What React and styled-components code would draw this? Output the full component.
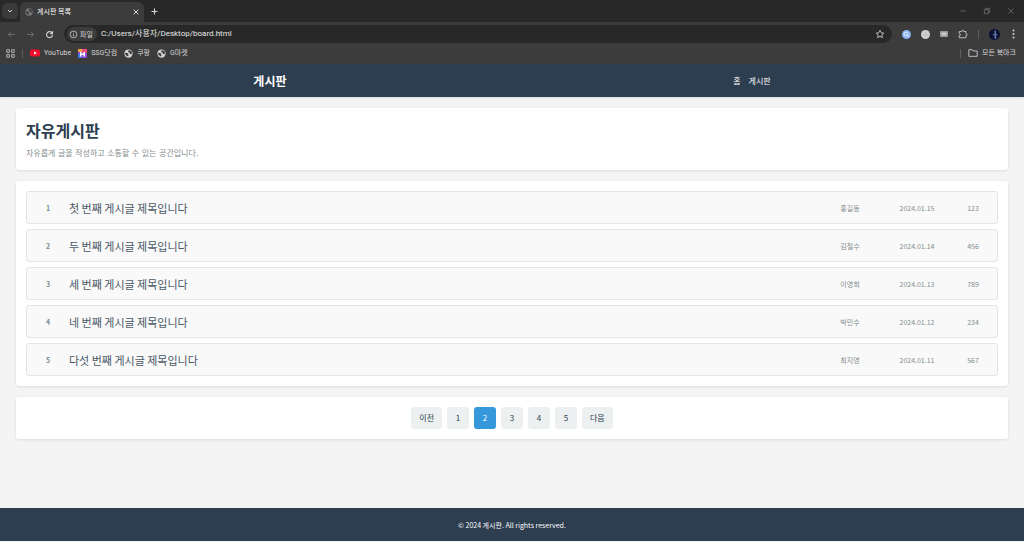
import React from 'react';
import styled, { createGlobalStyle, ThemeProvider } from 'styled-components';

const theme = {
	font: {
		page: "'Noto Sans CJK KR', 'Noto Sans', sans-serif",
		chrome: "Roboto, 'Noto Sans CJK KR', sans-serif",
		prose: "'DejaVu Sans', 'Noto Sans CJK KR', sans-serif",
	},
	color: {
		frame: '#282828',
		toolbar: '#3c3c3c',
		omnibox: '#282828',
		chromeText: '#d4d4d4',
		chromeMuted: '#7c7c7c',
		navy: '#2c3e50',
		page: '#f4f4f4',
		white: '#fff',
		row: '#f9f9f9',
		rowBorder: '#e3e5e6',
		grey: '#7f8c8d',
		title: '#4a5866',
		button: '#ecf0f1',
		blue: '#3498db',
	},
	shadow: '0 1px 3px rgba(0, 0, 0, 0.1)',
};

const GlobalStyle = createGlobalStyle`
	* {
		box-sizing: border-box;
	}
	html, body, #root {
		height: 100%;
	}
	body {
		margin: 0;
		font-family: ${theme.font.page};
		background: #f4f4f4;
	}
	a {
		color: inherit;
		text-decoration: none;
	}
	button, input {
		font-family: inherit;
		margin: 0;
	}
`;

const Window = styled.div`
	min-height: 100vh;
	display: flex;
	flex-direction: column;
	padding-bottom: 1px;
`;

/* browser */

const Chrome = styled.div`
	font-family: ${props => props.theme.font.chrome};
`;

const TabStrip = styled.div`
	display: flex;
	align-items: stretch;
	height: 22px;
	padding-left: 2px;
	background: ${props => props.theme.color.frame};
	color: ${props => props.theme.color.chromeText};
`;

const IconButton = styled.button`
	display: flex;
	align-items: center;
	justify-content: center;
	flex: none;
	width: 16px;
	height: 16px;
	padding: 0;
	border: none;
	border-radius: 5px;
	background: ${props => props.$fill || 'none'};
	color: ${props => (props.$muted ? props.theme.color.chromeMuted : props.theme.color.chromeText)};
	align-self: center;
	cursor: pointer;

	& svg {
		display: block;
	}
`;

const Tab = styled.div`
	display: flex;
	align-items: center;
	gap: 4px;
	width: 124px;
	margin: 2px 2px 0;
	padding: 0 0 0 5px;
	border-radius: 6px 6px 0 0;
	background: ${props => props.theme.color.toolbar};
	font-size: 7px;
	line-height: 12px;
`;

const TabTitle = styled.span`
	flex: 1;
	color: #fff;
`;

const WindowControls = styled.div`
	display: flex;
	gap: 8px;
	margin-left: auto;
	padding-right: 5px;
`;

const Divider = styled.span`
	width: 1px;
	height: 9px;
	background: #5e5e5e;
`;

const Toolbar = styled.div`
	display: flex;
	align-items: center;
	gap: 3px;
	height: 24px;
	padding: 0 3px;
	background: ${props => props.theme.color.toolbar};

	& > ${Divider} {
		margin: 0 4px;
	}
`;

const Omnibox = styled.div`
	display: flex;
	align-items: center;
	flex: 1;
	height: 18px;
	margin: 0 3px 0 4px;
	padding: 0 4px 0 3px;
	border-radius: 9px;
	background: ${props => props.theme.color.omnibox};
	color: ${props => props.theme.color.chromeText};
`;

const FileChip = styled.span`
	display: flex;
	align-items: center;
	gap: 2px;
	height: 14px;
	padding: 0 4px 0 2px;
	border-radius: 7px;
	background: #3c3c3c;
	font-size: 7px;
`;

const UrlInput = styled.input`
	flex: 1;
	min-width: 0;
	padding: 0 0 0 4px;
	border: none;
	outline: none;
	background: none;
	color: #e8e8e8;
	font-size: 8px;
	line-height: 14px;
`;

const Bookmarks = styled.div`
	display: flex;
	align-items: center;
	gap: 7px;
	height: 18px;
	padding: 0 8px 4px 6px;
	background: ${props => props.theme.color.toolbar};
	color: ${props => props.theme.color.chromeText};
	font-size: 7px;
	line-height: 12px;
`;

const Bookmark = styled.a`
	display: flex;
	align-items: center;
	gap: 4px;
`;

const Spacer = styled.span`
	flex: 1;
`;

/* board page */

const SiteHeader = styled.header`
	position: relative;
	display: flex;
	align-items: center;
	justify-content: space-around;
	height: 33px;
	padding: 0 30px;
	background: ${props => props.theme.color.navy};
	box-shadow: ${props => props.theme.shadow};
	color: #fff;
`;

const Logo = styled.div`
	font-size: 12px;
	font-weight: 700;
	line-height: 16px;
`;

const Nav = styled.nav`
	display: flex;
	gap: 8px;
	font-size: 8px;
	line-height: 12px;
`;

const Main = styled.main`
	flex: 1;
	display: flex;
	flex-direction: column;
	gap: 11px;
	padding: 11px 16px;
	background: ${props => props.theme.color.page};
`;

const Card = styled.section`
	padding: 10px;
	border-radius: 3px;
	background: ${props => props.theme.color.white};
	box-shadow: ${props => props.theme.shadow};
`;

const Title = styled.h1`
	margin: 0 0 5px;
	color: ${props => props.theme.color.navy};
	font-size: 16px;
	line-height: 24px;
`;

const Subtitle = styled.p`
	margin: 0;
	color: ${props => props.theme.color.grey};
	font-family: ${props => props.theme.font.prose};
	font-size: 8px;
	line-height: 13px;
`;

const PostList = styled.ul`
	display: flex;
	flex-direction: column;
	gap: 5px;
	margin: 0;
	padding: 0;
	list-style: none;
`;

const PostRow = styled.li`
	display: grid;
	grid-template-columns: 22px 1fr 48px 66px 26px;
	column-gap: 10px;
	align-items: center;
	height: 33px;
	padding: 0 11px 0 10px;
	border: 1px solid ${props => props.theme.color.rowBorder};
	border-radius: 3px;
	background: ${props => props.theme.color.row};
`;

const PostTitle = styled.a`
	color: ${props => props.theme.color.title};
	font-size: 11px;
	line-height: 16px;
`;

const PostMeta = styled.span`
	color: ${props => props.theme.color.grey};
	font-size: 7px;
	font-weight: ${props => (props.$strong ? 700 : 400)};
	line-height: 12px;
	text-align: center;
`;

const Pagination = styled.nav`
	display: flex;
	justify-content: center;
	gap: 5px;
`;

const PageButton = styled.button`
	min-width: 22px;
	height: 22px;
	padding: 0 8px;
	border: none;
	border-radius: 3px;
	background: ${props => (props.$active ? props.theme.color.blue : props.theme.color.button)};
	color: ${props => (props.$active ? '#fff' : props.theme.color.navy)};
	font-size: 8px;
	line-height: 12px;
	cursor: pointer;
`;

const SiteFooter = styled.footer`
	display: flex;
	align-items: center;
	justify-content: center;
	height: 33px;
	background: ${props => props.theme.color.navy};
	color: #fff;
	font-size: 7px;
	line-height: 12px;
`;

/* icons */

const Icon = ({ size = 10, stroke = 2, children, ...rest }) => (
	<svg
		width={size}
		height={size}
		viewBox="0 0 24 24"
		fill="none"
		stroke="currentColor"
		strokeWidth={stroke}
		{...rest}
	>
		{children}
	</svg>
);

const Globe = ({ color = '#d4d4d4', land = '#3c3c3c', size = 9 }) => (
	<svg width={size} height={size} viewBox="0 0 24 24">
		<circle cx="12" cy="12" r="11" fill={color} />
		<path d="M3 10l7 1 2 4-1 5-4-2-4-5z M12 3l8 2 1 8-4 1-2-4-4-2z" fill={land} />
	</svg>
);

const YouTubeIcon = () => (
	<svg width="10" height="8" viewBox="0 0 20 16">
		<rect y="1" width="20" height="14" rx="4" fill="#f50f2d" />
		<path d="M8 5l6 3-6 3z" fill="#fff" />
	</svg>
);

const SsgIcon = () => (
	<svg width="9" height="9" viewBox="0 0 18 18">
		<rect width="18" height="18" rx="2" fill="#8a4be0" />
		<path d="M0 0h9v6H0z" fill="#f7a03c" />
		<path d="M9 0h9v8H9z" fill="#ef4a7c" />
		<path d="M0 10h6v8H0z" fill="#3d7bf0" />
		<path d="M4 6h3v3h4V6h3v9h-3v-3H7v3H4z" fill="#fff" />
	</svg>
);

const posts = [
	{ id: 1, title: '첫 번째 게시글 제목입니다', author: '홍길동', date: '2024.01.15', views: 123 },
	{ id: 2, title: '두 번째 게시글 제목입니다', author: '김철수', date: '2024.01.14', views: 456 },
	{ id: 3, title: '세 번째 게시글 제목입니다', author: '이영희', date: '2024.01.13', views: 789 },
	{ id: 4, title: '네 번째 게시글 제목입니다', author: '박민수', date: '2024.01.12', views: 234 },
	{ id: 5, title: '다섯 번째 게시글 제목입니다', author: '최지영', date: '2024.01.11', views: 567 },
];

const pages = ['이전', '1', '2', '3', '4', '5', '다음'];

const BrowserChrome = () => (
	<Chrome>
		<TabStrip>
			<IconButton aria-label="탭 검색" $fill="#3a3a3a">
				<Icon size={8} stroke={3}><path d="M6 9l6 6 6-6" /></Icon>
			</IconButton>
			<Tab>
				<Globe color="#777" size={8} />
				<TabTitle>게시판 목록</TabTitle>
				<IconButton aria-label="탭 닫기">
					<Icon size={8} stroke={3}><path d="M5 5l14 14M19 5L5 19" /></Icon>
				</IconButton>
			</Tab>
			<IconButton aria-label="새 탭">
				<Icon size={9} stroke={3}><path d="M12 4v16M4 12h16" /></Icon>
			</IconButton>
			<WindowControls>
				<IconButton aria-label="최소화" $muted>
					<Icon size={8}><path d="M4 12h16" /></Icon>
				</IconButton>
				<IconButton aria-label="창 복원" $muted>
					<Icon size={8}><path d="M4 8h12v12H4zM8 8V4h12v12h-4" /></Icon>
				</IconButton>
				<IconButton aria-label="닫기" $muted>
					<Icon size={8}><path d="M4 4l16 16M20 4L4 20" /></Icon>
				</IconButton>
			</WindowControls>
		</TabStrip>
		<Toolbar>
			<IconButton aria-label="뒤로" $muted>
				<Icon size={9}><path d="M21 12H4M11 5l-7 7 7 7" /></Icon>
			</IconButton>
			<IconButton aria-label="앞으로" $muted>
				<Icon size={9}><path d="M3 12h17M13 5l7 7-7 7" /></Icon>
			</IconButton>
			<IconButton aria-label="새로고침">
				<Icon size={9} stroke={3}><path d="M19 8a8 8 0 1 0 1 6M20 3v7h-7" /></Icon>
			</IconButton>
			<Omnibox>
				<FileChip>
					<Icon size={9}><circle cx="12" cy="12" r="9" /><path d="M12 11v6M12 7v2" /></Icon>
					파일
				</FileChip>
				<UrlInput aria-label="주소" defaultValue="C:/Users/사용자/Desktop/board.html" />
				<IconButton aria-label="북마크에 추가">
					<Icon size={10}><path d="M12 3l3 6 6 1-4.500 4 1 7-5.500-3.500L6.500 21l1-7L3 10l6-1z" /></Icon>
				</IconButton>
			</Omnibox>
			<IconButton aria-label="검색 확장">
				<svg width="9" height="9" viewBox="0 0 18 18">
					<circle cx="9" cy="9" r="9" fill="#8ab4f0" />
					<circle cx="8" cy="8" r="4" fill="none" stroke="#e8f0ff" strokeWidth="2" />
					<path d="M11 11l3 3" stroke="#e8f0ff" strokeWidth="2" />
				</svg>
			</IconButton>
			<IconButton aria-label="확장 프로그램 1">
				<svg width="9" height="9" viewBox="0 0 18 18">
					<circle cx="9" cy="9" r="9" fill="#d0d0d0" />
					<path d="M9 4v10M5 9h8" stroke="#b0b0b0" />
				</svg>
			</IconButton>
			<IconButton aria-label="확장 프로그램 2">
				<svg width="8" height="6" viewBox="0 0 16 12">
					<rect width="16" height="12" rx="2" fill="#999" />
					<rect x="3" y="3" width="10" height="6" fill="#ccc" />
				</svg>
			</IconButton>
			<IconButton aria-label="확장 프로그램">
				<Icon size={10}><path d="M3 6h6c0-4 5-4 5 0h5v5c4 0 4 5 0 5v5H3v-5c4 0 4-5 0-5z" /></Icon>
			</IconButton>
			<Divider />
			<IconButton aria-label="프로필">
				<svg width="11" height="11" viewBox="0 0 22 22">
					<circle cx="11" cy="11" r="11" fill="#0c1230" />
					<path d="M11 2l3 2v6l4 1-4 2 1 6-4 1v-7l-5-1 5-2z" fill="#5f78a8" />
				</svg>
			</IconButton>
			<IconButton aria-label="메뉴">
				<svg width="3" height="10" viewBox="0 0 6 20" fill="#d4d4d4">
					<circle cx="3" cy="3" r="2" />
					<circle cx="3" cy="10" r="2" />
					<circle cx="3" cy="17" r="2" />
				</svg>
			</IconButton>
		</Toolbar>
		<Bookmarks>
			<Icon size={9} stroke={2}><path d="M2 2h7v7H2zM15 2h7v7h-7zM2 15h7v7H2zM15 15h7v7h-7z" /></Icon>
			<Divider />
			<Bookmark href="#youtube"><YouTubeIcon />YouTube</Bookmark>
			<Bookmark href="#ssg"><SsgIcon />SSG닷컴</Bookmark>
			<Bookmark href="#coupang"><Globe />쿠팡</Bookmark>
			<Bookmark href="#gmarket"><Globe />G마켓</Bookmark>
			<Spacer />
			<Divider />
			<Bookmark href="#bookmarks">
				<Icon size={10}><path d="M2 4h8l2 3h10v13H2z" /></Icon>
				모든 북마크
			</Bookmark>
		</Bookmarks>
	</Chrome>
);

const App = () => (
	<ThemeProvider theme={theme}>
		<GlobalStyle />
		<Window>
			<BrowserChrome />
			<SiteHeader>
				<Logo>게시판</Logo>
				<Nav>
					<a href="#home">홈</a>
					<a href="#board">게시판</a>
				</Nav>
			</SiteHeader>
			<Main>
				<Card>
					<Title>자유게시판</Title>
					<Subtitle>자유롭게 글을 작성하고 소통할 수 있는 공간입니다.</Subtitle>
				</Card>
				<Card>
					<PostList>
						{posts.map(post => (
							<PostRow key={post.id}>
								<PostMeta $strong>{post.id}</PostMeta>
								<PostTitle href={`#post-${post.id}`}>{post.title}</PostTitle>
								<PostMeta>{post.author}</PostMeta>
								<PostMeta>{post.date}</PostMeta>
								<PostMeta>{post.views}</PostMeta>
							</PostRow>
						))}
					</PostList>
				</Card>
				<Card>
					<Pagination>
						{pages.map(page => (
							<PageButton key={page} $active={page === '2'}>{page}</PageButton>
						))}
					</Pagination>
				</Card>
			</Main>
			<SiteFooter>© 2024 게시판. All rights reserved.</SiteFooter>
		</Window>
	</ThemeProvider>
);

export default App;
